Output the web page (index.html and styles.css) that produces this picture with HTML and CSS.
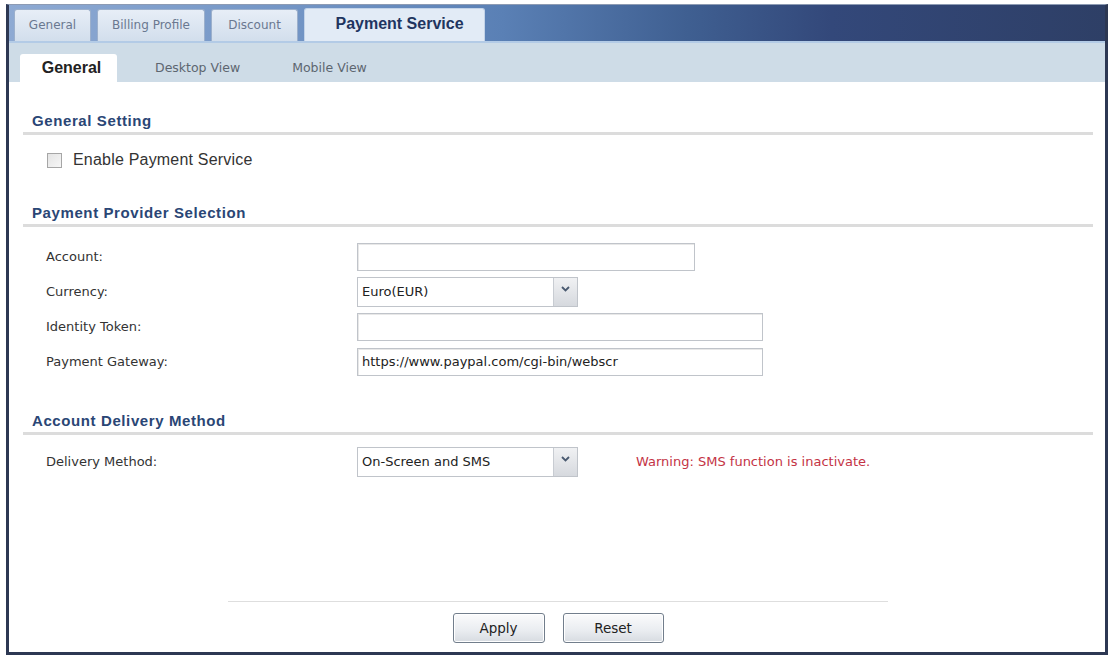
FILE: index.html
```html
<!DOCTYPE html>
<html lang="en">

<head>
    <meta charset="UTF-8">
    <title>Payment Service</title>
    <link rel="stylesheet" href="styles.css">
</head>

<body>
    <div class="frame">
        <!-- top level tabs -->
        <ul class="tabBar">
            <li class="tab tabGeneral">General</li>
            <li class="tab tabBilling">Billing Profile</li>
            <li class="tab tabDiscount">Discount</li>
            <li class="tab active">Payment Service</li>
        </ul>
        <!-- second level tabs -->
        <ul class="subBar">
            <li class="subTab active">General</li>
            <li class="subTab">Desktop View</li>
            <li class="subTab">Mobile View</li>
        </ul>

        <div class="content">
            <h3 class="section first">General Setting</h3>
            <label class="checkRow">
                <span class="checkBox"></span>
                <span>Enable Payment Service</span>
            </label>

            <h3 class="section">Payment Provider Selection</h3>
            <div class="formRow rowFirst">
                <span class="label">Account:</span>
                <span class="field wAccount"></span>
            </div>
            <div class="formRow">
                <span class="label">Currency:</span>
                <span class="select">
                    <span class="selectText">Euro(EUR)</span>
                    <span class="selectArrow">
                        <svg width="9" height="6" viewBox="0 0 9 6"><path d="M1 1 L4.5 4.5 L8 1" fill="none" stroke="#4a5a70" stroke-width="1.8"/></svg>
                    </span>
                </span>
            </div>
            <div class="formRow">
                <span class="label">Identity Token:</span>
                <span class="field wLong"></span>
            </div>
            <div class="formRow">
                <span class="label">Payment Gateway:</span>
                <span class="field wLong">https://www.paypal.com/cgi-bin/webscr</span>
            </div>

            <h3 class="section third">Account Delivery Method</h3>
            <div class="formRow rowDelivery">
                <span class="label">Delivery Method:</span>
                <span class="select">
                    <span class="selectText">On-Screen and SMS</span>
                    <span class="selectArrow">
                        <svg width="9" height="6" viewBox="0 0 9 6"><path d="M1 1 L4.5 4.5 L8 1" fill="none" stroke="#4a5a70" stroke-width="1.8"/></svg>
                    </span>
                </span>
                <span class="warning">Warning: SMS function is inactivate.</span>
            </div>

            <div class="footer">
                <button class="btn btnApply">Apply</button>
                <button class="btn btnReset">Reset</button>
            </div>
        </div>
    </div>
</body>

</html>
```

FILE: styles.css
```css
body {
    margin: 0;
    background: #fff;
    font-family: "DejaVu Sans", Verdana, sans-serif;
}

div.frame {
    margin: 4px 7px 0 6px;
    height: 651px;
    box-sizing: border-box;
    border: 3px solid #2d3853;
    border-top: 1px solid #8d9bb3;
    display: flex;
    flex-direction: column;
}

ul.tabBar {
    margin: 0;
    padding: 3px 0 0 5px;
    height: 36px;
    box-sizing: border-box;
    list-style: none;
    display: flex;
    align-items: flex-end;
    gap: 6px;
    background: linear-gradient(to right, #8eaad3 0%, #7496c6 25%, #5a80b5 45%, #3f5f91 62%, #33487a 75%, #2e3f66 100%);
}

li.tab {
    height: 32px;
    box-sizing: border-box;
    text-align: center;
    line-height: 30px;
    font-size: 12px;
    color: #6a7890;
    background: linear-gradient(#e7eef7, #d2deec);
    border: 1px solid #9cb0cc;
    border-bottom: none;
    border-radius: 3px 3px 0 0;
}

li.tabGeneral {
    width: 77px;
}

li.tabBilling {
    width: 108px;
}

li.tabDiscount {
    width: 87px;
}

li.tab.active {
    width: 181px;
    height: 33px;
    padding-left: 10px;
    font-family: "Liberation Sans", Arial, sans-serif;
    font-size: 16px;
    font-weight: bold;
    color: #1f3560;
    background: #e2ebf6;
    border-color: #c3d3e8;
}

ul.subBar {
    margin: 0;
    padding: 0 0 0 11px;
    height: 41px;
    box-sizing: border-box;
    list-style: none;
    display: flex;
    align-items: flex-end;
    background: #cedce7;
    border-top: 2px solid #b3cbe6;
}

li.subTab {
    height: 28px;
    line-height: 28px;
    padding: 0 14px 0 38px;
    font-size: 12.5px;
    color: #5d6670;
}

li.subTab.active {
    width: 97px;
    box-sizing: border-box;
    padding: 0 0 0 6px;
    text-align: center;
    font-family: "Liberation Sans", Arial, sans-serif;
    font-size: 16px;
    font-weight: bold;
    color: #222;
    background: #fff;
    border-radius: 3px 3px 0 0;
}

div.content {
    flex: 1;
    display: flex;
    flex-direction: column;
    padding: 0 12px 0 14px;
}

h3.section {
    margin: 26px 0 0 0;
    height: 23px;
    line-height: 23px;
    padding-left: 9px;
    font-family: "Liberation Sans", Arial, sans-serif;
    font-size: 15px;
    font-weight: bold;
    color: #2a4675;
    border-bottom: 3px solid #dcdcdc;
    letter-spacing: 0.6px;
}

h3.section.first {
    margin-top: 27px;
}

h3.section.third {
    margin-top: 30px;
}

label.checkRow {
    margin-top: 10px;
    height: 30px;
    display: flex;
    align-items: center;
    padding-left: 24px;
    font-family: "Liberation Sans", Arial, sans-serif;
    font-size: 16px;
    letter-spacing: 0.2px;
    color: #333;
}

span.checkBox {
    width: 13px;
    height: 13px;
    margin-right: 11px;
    border: 1px solid #a6a6a6;
    background: linear-gradient(135deg, #e4e4e4, #f6f6f6);
}

div.formRow {
    height: 35px;
    display: flex;
    align-items: center;
    padding-left: 23px;
    font-size: 13px;
    color: #333;
}

div.formRow.rowFirst {
    margin-top: 12px;
}

div.formRow.rowDelivery {
    margin-top: 9px;
}

span.label {
    width: 311px;
    flex: none;
}

span.field {
    height: 28px;
    box-sizing: border-box;
    border: 1px solid #c0c4ca;
    box-shadow: inset 1px 1px 0 #e8e8e8;
    padding-left: 4px;
    line-height: 26px;
    color: #222;
}

span.wAccount {
    width: 338px;
}

span.wLong {
    width: 406px;
}

span.select {
    width: 221px;
    height: 30px;
    box-sizing: border-box;
    border: 1px solid #c0c4ca;
    display: flex;
    color: #222;
}

span.selectText {
    flex: 1;
    padding-left: 4px;
    line-height: 28px;
}

span.selectArrow {
    width: 24px;
    border-left: 1px solid #c8ccd2;
    background: linear-gradient(#f0f1f3, #d6d9de);
    display: flex;
    align-items: center;
    justify-content: center;
    padding-bottom: 6px;
    box-sizing: border-box;
}

span.warning {
    margin-left: 58px;
    color: #c43345;
}

div.footer {
    margin: auto 205px 0 205px;
    border-top: 1px solid #dedede;
    padding: 11px 0 9px 0;
    display: flex;
    justify-content: center;
    gap: 18px;
}

button.btn {
    height: 30px;
    font-family: "DejaVu Sans", Verdana, sans-serif;
    font-size: 13.5px;
    color: #222;
    border: 1px solid #727e8c;
    border-radius: 3px;
    background: linear-gradient(#fbfbfc, #e9ecf0 60%, #d7dbe1);
    box-shadow: inset 0 0 0 1px #fff;
}

button.btnApply {
    width: 92px;
}

button.btnReset {
    width: 101px;
}
```
